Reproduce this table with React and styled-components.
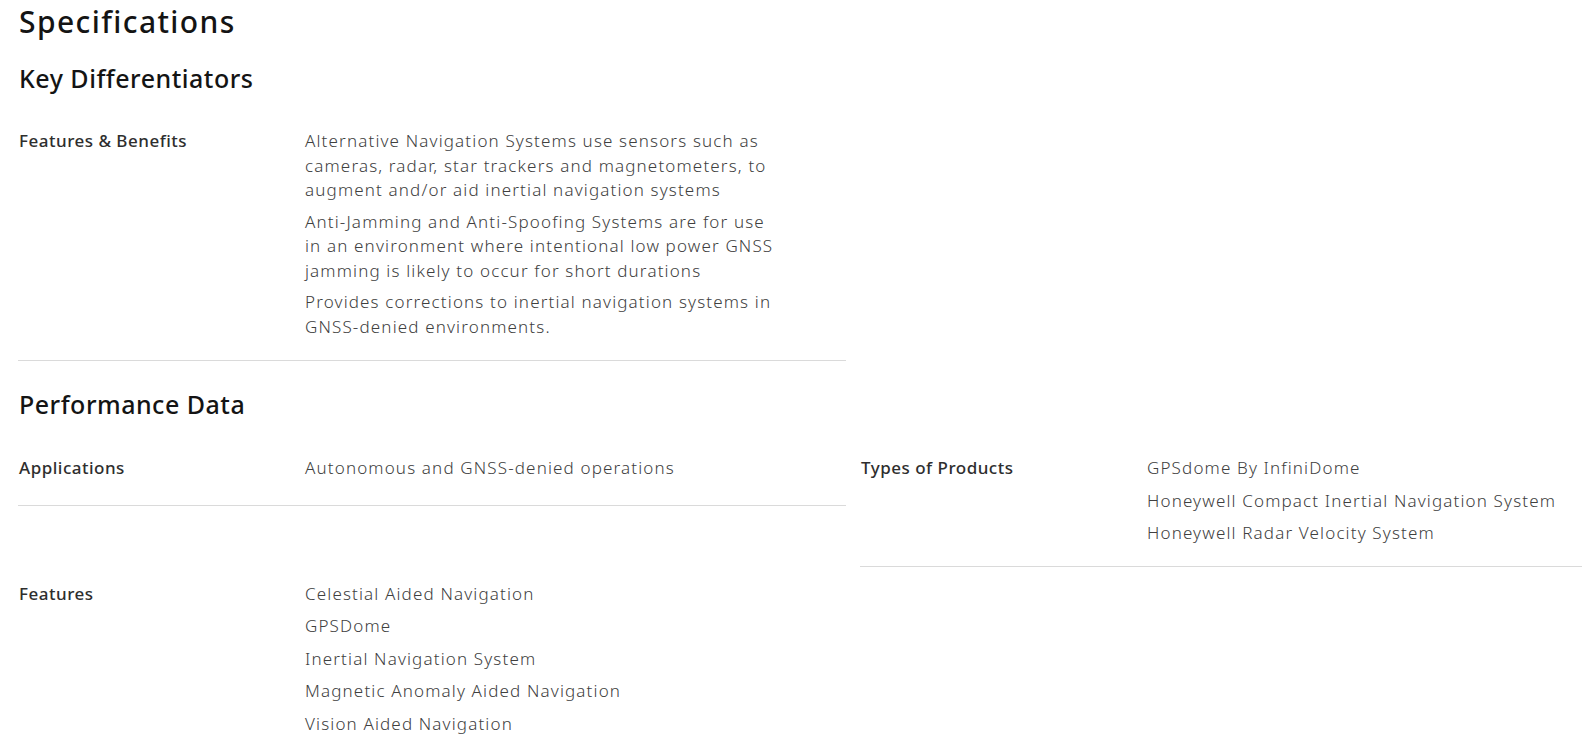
import React from 'react';
import styled, { createGlobalStyle } from 'styled-components';

const GlobalStyle = createGlobalStyle`
  body {
    margin: 0;
    background: #fff;
    font-family: "Noto Sans", "Open Sans", sans-serif;
    color: #303030;
  }
`;

const differentiators = [
  {
    label: 'Features & Benefits',
    values: [
      'Alternative Navigation Systems use sensors such as cameras, radar, star trackers and magnetometers, to augment and/or aid inertial navigation systems',
      'Anti-Jamming and Anti-Spoofing Systems are for use in an environment where intentional low power GNSS jamming is likely to occur for short durations',
      'Provides corrections to inertial navigation systems in GNSS-denied environments.',
    ],
  },
];

const performance = [
  { label: 'Applications', values: ['Autonomous and GNSS-denied operations'] },
  {
    label: 'Types of Products',
    values: [
      'GPSdome By InfiniDome',
      'Honeywell Compact Inertial Navigation System',
      'Honeywell Radar Velocity System',
    ],
  },
  {
    label: 'Features',
    values: [
      'Celestial Aided Navigation',
      'GPSDome',
      'Inertial Navigation System',
      'Magnetic Anomaly Aided Navigation',
      'Vision Aided Navigation',
    ],
  },
];

const App = () => (
  <>
    <GlobalStyle />
    <Page>
      <Title>Specifications</Title>
      <Section>
        <SectionTitle $top="22px" $bottom="16px">Key Differentiators</SectionTitle>
        <Column>
          {differentiators.map((row) => (
            <Row key={row.label} $pad="19px 0 21px">
              <Label>{row.label}</Label>
              <Values>
                {row.values.map((v) => (
                  <Para key={v}>{v}</Para>
                ))}
              </Values>
            </Row>
          ))}
        </Column>
      </Section>
      <Section>
        <SectionTitle $top="27px" $bottom="21px">Performance Data</SectionTitle>
        <Grid>
          {performance.map((row) => (
            <Row key={row.label} $pad="15px 0 20px">
              <Label $gap="5px">{row.label}</Label>
              <Values>
                {row.values.map((v) => (
                  <Item key={v}>{v}</Item>
                ))}
              </Values>
            </Row>
          ))}
        </Grid>
      </Section>
    </Page>
  </>
);

const Page = styled.main`
  padding: 4px 0 24px 18px;
`;

const Title = styled.h1`
  margin: 0;
  padding-left: 1px;
  font-size: 30px;
  font-weight: 500;
  line-height: 36px;
  letter-spacing: 1.4px;
  color: #141414;
`;

const Section = styled.section`
  display: flex;
  flex-direction: column;
`;

const SectionTitle = styled.h2`
  margin: ${(p) => p.$top} 0 ${(p) => p.$bottom};
  padding-left: 1px;
  font-size: 25px;
  font-weight: 500;
  line-height: 32px;
  letter-spacing: 0.5px;
  color: #141414;
`;

const Column = styled.div`
  width: 828px;
`;

const Grid = styled.div`
  display: grid;
  grid-template-columns: 828px 1fr;
  column-gap: 14px;
  align-items: start;
`;

const Row = styled.div`
  display: grid;
  grid-template-columns: 287px 1fr;
  padding: ${(p) => p.$pad};
  border-bottom: 1px solid #dadada;
`;

const Label = styled.div`
  padding-left: 1px;
  margin-bottom: ${(p) => p.$gap || '0'};
  font-size: 17px;
  font-weight: 500;
  line-height: 24px;
  letter-spacing: 0.5px;
  color: #2e2e2e;
`;

const Values = styled.div`
  max-width: 476px;
  font-size: 17px;
  font-weight: 300;
  line-height: 24.5px;
  letter-spacing: 1.15px;
  color: #404040;
`;

const Para = styled.p`
  margin: 0 0 7px;
  &:last-child {
    margin-bottom: 0;
  }
`;

const Item = styled.div`
  margin-bottom: 8px;
  white-space: nowrap;
  &:last-child {
    margin-bottom: 0;
  }
`;

export default App;
